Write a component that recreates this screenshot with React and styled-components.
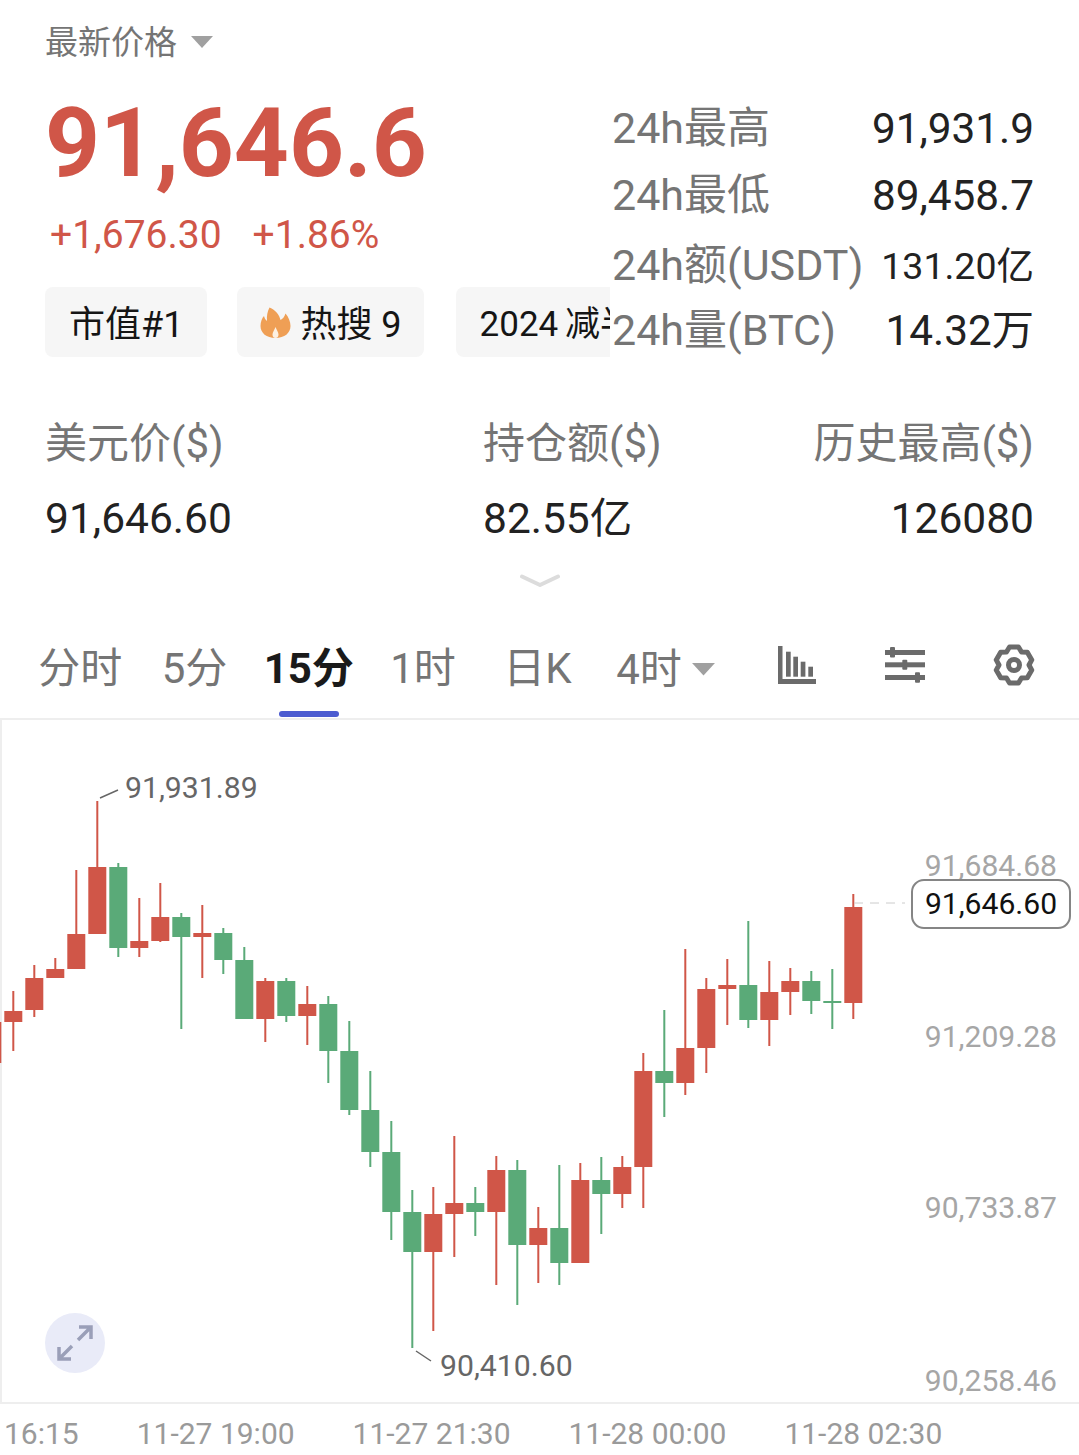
import React from "react";
import styled, { createGlobalStyle } from "styled-components";

const RED = "#d05648";
const GREEN = "#5aaa78";

const GlobalStyle = createGlobalStyle`
  html, body {
    margin: 0;
    padding: 0;
    background: #fff;
    font-family: Roboto, "Noto Sans CJK SC", sans-serif;
  }
`;

// [x, up?, wick top, wick bottom, body top, body bottom]
const candles = [
  [-7.7, 1, 1000, 1075, 1022, 1063],
  [13.3, 1, 991, 1051, 1011, 1022],
  [34.3, 1, 965, 1017, 978, 1010],
  [55.3, 1, 958, 978, 969, 978],
  [76.3, 1, 870, 969, 934, 969],
  [97.3, 1, 801, 934, 867, 934],
  [118.3, 0, 863, 957, 867, 948],
  [139.3, 1, 898, 957, 941, 948],
  [160.3, 1, 883, 942, 917, 941],
  [181.3, 0, 913, 1029, 917, 937],
  [202.3, 1, 905, 978, 933, 937],
  [223.3, 0, 928, 974, 933, 960],
  [244.3, 0, 947, 1019, 960, 1019],
  [265.3, 1, 978, 1042, 981, 1019],
  [286.3, 0, 978, 1022, 981, 1016],
  [307.3, 1, 986, 1045, 1004, 1016],
  [328.3, 0, 996, 1083, 1004, 1051],
  [349.3, 0, 1021, 1115, 1051, 1110],
  [370.3, 0, 1071, 1167, 1110, 1152],
  [391.3, 0, 1121, 1240, 1152, 1212],
  [412.3, 0, 1190, 1348, 1212, 1252],
  [433.3, 1, 1187, 1331, 1214, 1252],
  [454.3, 1, 1136, 1257, 1203, 1214],
  [475.3, 0, 1187, 1236, 1203, 1212],
  [496.3, 1, 1156, 1285, 1170, 1212],
  [517.3, 0, 1160, 1305, 1170, 1245],
  [538.3, 1, 1207, 1283, 1228, 1245],
  [559.3, 0, 1165, 1285, 1228, 1263],
  [580.3, 1, 1163, 1263, 1180, 1263],
  [601.3, 0, 1157, 1234, 1180, 1194],
  [622.3, 1, 1156, 1208, 1167, 1194],
  [643.3, 1, 1053, 1208, 1071, 1167],
  [664.3, 0, 1010, 1117, 1071, 1083],
  [685.3, 1, 949, 1095, 1048, 1083],
  [706.3, 1, 978, 1073, 989, 1048],
  [727.3, 1, 959, 1025, 985, 989],
  [748.3, 0, 921, 1028, 985, 1020],
  [769.3, 1, 961, 1046, 992, 1020],
  [790.3, 1, 968, 1015, 981, 992],
  [811.3, 0, 971, 1014, 981, 1001],
  [832.3, 0, 969, 1029, 1001, 1003],
  [853.3, 1, 894, 1019, 907, 1003],
];

const tabs = [
  { label: "分时" },
  { label: "5分" },
  { label: "15分", active: true },
  { label: "1时" },
  { label: "日K" },
];

const stats = [
  { label: "24h最高", value: "91,931.9" },
  { label: "24h最低", value: "89,458.7" },
  { label: "24h额(USDT)", value: "131.20亿", small: true },
  { label: "24h量(BTC)", value: "14.32万" },
];

// six toothed outline, same shape as the app's settings icon
const gearPath = () => {
  const pt = (deg, r) => {
    const a = (deg * Math.PI) / 180;
    return `${(21 + r * Math.cos(a)).toFixed(2)} ${(21 + r * Math.sin(a)).toFixed(2)}`;
  };
  let d = "";
  for (let i = 0; i < 6; i++) {
    const a = -90 + i * 60;
    d += `${i ? "L" : "M"}${pt(a - 14, 18.5)}L${pt(a + 14, 18.5)}L${pt(a + 30, 15)}`;
  }
  return d + "Z";
};

const Caret = ({ w = 22, h = 12, color = "#a0a0a0" }) => (
  <svg width={w} height={h} viewBox="0 0 22 12">
    <path d="M0 0H22L11 12Z" fill={color} />
  </svg>
);

const Flame = () => (
  <FlameSvg width="31" height="31" viewBox="0 0 30 31">
    <path
      d="M9 .5C15 3 19 8 20 13C22 12 24 10 25 6.500C28 10 30 15 30 19C30 26 24 31 15 31C6 31 0 26 0 19C0 15 1.500 11 3.500 9C4 11 5 13 6.500 14C6 9 7 4 9 .5Z"
      fill="#ef9f55"
    />
    <path
      d="M15 20C16 23 18 25 18 27.500C18 29.500 17 31 15 31C13 31 12 29.500 12 27.500C12 25 14 23 15 20Z"
      fill="#fdf1e2"
    />
  </FlameSvg>
);

const BarsIcon = () => (
  <svg width="38" height="38" viewBox="0 0 38 38" fill="#6b6b6b">
    <rect x="0" y="0" width="4.500" height="38" />
    <rect x="0" y="33" width="38" height="5" />
    <rect x="8" y="5.700" width="4.700" height="25" />
    <rect x="15.300" y="10.700" width="4.700" height="20" />
    <rect x="22.700" y="15.700" width="4.700" height="15" />
    <rect x="30.300" y="20.700" width="4.700" height="10" />
  </svg>
);

const SlidersIcon = () => (
  <svg width="40" height="36" viewBox="0 0 40 36" fill="#6b6b6b">
    <rect x="0" y="3" width="40" height="5" />
    <rect x="5" y="0" width="5" height="10.500" rx="1" />
    <rect x="0" y="15.300" width="40" height="5" />
    <rect x="17.300" y="12.800" width="5" height="10" rx="1" />
    <rect x="0" y="28" width="40" height="5" />
    <rect x="30" y="25.300" width="5" height="10.500" rx="1" />
  </svg>
);

const GearIcon = () => (
  <svg width="42" height="42" viewBox="0 0 42 42" fill="none" stroke="#6b6b6b">
    <path d={gearPath()} strokeWidth="5" strokeLinejoin="round" />
    <circle cx="21" cy="21" r="5.500" strokeWidth="5" />
  </svg>
);

const ExpandIcon = () => (
  <svg width="36" height="36" viewBox="0 0 36 36" fill="none" stroke="#9a9fb8" strokeWidth="3.500">
    <path d="M21 15 34 2M22 2h12v12" />
    <path d="M15 21 2 34M14 34H2V22" />
  </svg>
);

const Candles = () => (
  <CandleSvg viewBox="0 720 1079 683" width="1079" height="683">
    {candles.map(([x, up, wickTop, wickBottom, bodyTop, bodyBottom]) => {
      const color = up ? RED : GREEN;
      return (
        <g key={x} fill={color}>
          <rect x={x - 1} y={wickTop} width="2" height={wickBottom - wickTop} />
          <rect x={x - 9} y={bodyTop} width="18" height={bodyBottom - bodyTop} />
        </g>
      );
    })}
    <path d="M100 798 118 790M416 1351 431 1361" stroke="#666" strokeWidth="1.500" fill="none" />
    <path d="M854 903H905" stroke="#ccc" strokeWidth="1" strokeDasharray="9 7" fill="none" />
  </CandleSvg>
);

const App = () => (
  <Page>
    <GlobalStyle />
    <Top>
      <Left>
        <Title>
          最新价格
          <Caret />
        </Title>
        <Price>91,646.6</Price>
        <Change>
          <span>+1,676.30</span>
          <span>+1.86%</span>
        </Change>
        <Tags>
          <Tag>市值#1</Tag>
          <HotTag>
            <Flame />
            热搜 9
          </HotTag>
          <Tag $small>2024 减半</Tag>
        </Tags>
      </Left>
      <StatList>
        {stats.map((s) => (
          <StatRow key={s.label}>
            <StatLabel>{s.label}</StatLabel>
            <StatValue $small={s.small}>{s.value}</StatValue>
          </StatRow>
        ))}
      </StatList>
    </Top>

    <Summary>
      <SummaryCol>
        <SummaryLabel>美元价($)</SummaryLabel>
        <SummaryValue>91,646.60</SummaryValue>
      </SummaryCol>
      <SummaryCol>
        <SummaryLabel>持仓额($)</SummaryLabel>
        <SummaryValue>82.55亿</SummaryValue>
      </SummaryCol>
      <SummaryCol $right>
        <SummaryLabel>历史最高($)</SummaryLabel>
        <SummaryValue>126080</SummaryValue>
      </SummaryCol>
    </Summary>

    <Chevron>
      <svg width="40" height="14" viewBox="0 0 40 14" fill="none">
        <path d="M2 2.500 20 11 38 2.500" stroke="#dcdcdc" strokeWidth="4" strokeLinecap="round" strokeLinejoin="round" />
      </svg>
    </Chevron>

    <TabBar>
      {tabs.map((t) => (
        <Tab key={t.label} $active={t.active}>
          {t.label}
        </Tab>
      ))}
      <DropTab>
        4时
        <Caret w={23} h={12.5} />
      </DropTab>
      <IconTab>
        <BarsIcon />
      </IconTab>
      <IconTab>
        <SlidersIcon />
      </IconTab>
      <IconTab>
        <GearIcon />
      </IconTab>
    </TabBar>

    <Chart>
      <Candles />
      <ChartLabel $x={125} $y={50}>91,931.89</ChartLabel>
      <ChartLabel $x={440} $y={628}>90,410.60</ChartLabel>
      <AxisLabel $y={128}>91,684.68</AxisLabel>
      <AxisLabel $y={299}>91,209.28</AxisLabel>
      <AxisLabel $y={470}>90,733.87</AxisLabel>
      <AxisLabel $y={643}>90,258.46</AxisLabel>
      <PriceTag>91,646.60</PriceTag>
      <ExpandButton>
        <ExpandIcon />
      </ExpandButton>
    </Chart>

    <TimeAxis>
      <span>16:15</span>
      <span>11-27 19:00</span>
      <span>11-27 21:30</span>
      <span>11-28 00:00</span>
      <span>11-28 02:30</span>
    </TimeAxis>
  </Page>
);

export default App;

const Page = styled.div`
  width: 1079px;
  height: 1455px;
  overflow: hidden;
  background: #fff;
`;

const Top = styled.div`
  display: flex;
  height: 358px;
`;

const Left = styled.div`
  width: 610px;
  flex: none;
  padding: 20px 0 0 45px;
  box-sizing: border-box;
  overflow: hidden;
`;

const Title = styled.div`
  display: flex;
  align-items: center;
  gap: 14px;
  height: 44px;
  line-height: 43px;
  font-size: 33px;
  color: #757575;
`;

const Price = styled.div`
  margin-top: 23px;
  height: 112px;
  line-height: 112px;
  font-size: 96px;
  font-weight: 700;
  color: ${RED};
`;

const Change = styled.div`
  display: flex;
  gap: 31px;
  margin-top: 12px;
  padding-left: 5px;
  height: 48px;
  line-height: 48px;
  font-size: 39px;
  color: ${RED};
`;

const Tags = styled.div`
  display: flex;
  gap: 30px;
  margin-top: 28px;
`;

const Tag = styled.div`
  display: flex;
  flex: none;
  align-items: center;
  height: 70px;
  padding: 5px 24px 0;
  box-sizing: border-box;
  border-radius: 8px;
  background: #f6f6f6;
  line-height: 60px;
  font-size: ${(p) => (p.$small ? "35px" : "36px")};
  word-spacing: ${(p) => (p.$small ? "-2px" : "0")};
  color: #151515;
  white-space: pre;
`;

const HotTag = styled(Tag)`
  gap: 9px;
  margin-right: 2px;
  padding: 5px 22px 0 23px;
`;

const FlameSvg = styled.svg`
  margin-top: -5px;
`;

const StatList = styled.div`
  display: grid;
  grid-template-rows: 66px 68px 72px 58px;
  width: 422px;
  margin: 95px 0 0 2px;
`;

const StatRow = styled.div`
  display: flex;
  justify-content: space-between;
  align-items: center;
`;

const StatLabel = styled.span`
  line-height: 50px;
  font-size: 43px;
  color: #757575;
`;

const StatValue = styled.span`
  padding-top: 2px;
  line-height: 50px;
  font-size: ${(p) => (p.$small ? "37.500px" : "42.300px")};
  color: #222;
`;

const Summary = styled.div`
  display: grid;
  grid-template-columns: 438px 1fr auto;
  margin-top: 62px;
  padding: 0 45px;
`;

const SummaryCol = styled.div`
  display: flex;
  flex-direction: column;
  gap: 24px;
  text-align: ${(p) => (p.$right ? "right" : "left")};
`;

const SummaryLabel = styled.div`
  height: 50px;
  line-height: 48px;
  font-size: 42px;
  color: #757575;
`;

const SummaryValue = styled.div`
  height: 50px;
  line-height: 50px;
  font-size: 42.500px;
  color: #222;
`;

const Chevron = styled.div`
  display: flex;
  justify-content: center;
  margin-top: 30px;
  height: 14px;
`;

const TabBar = styled.div`
  display: flex;
  align-items: center;
  height: 99px;
  margin-top: 33px;
  padding-left: 23px;
  box-sizing: border-box;
  border-bottom: 2px solid #eee;
`;

const Tab = styled.div`
  position: relative;
  width: 114.300px;
  height: 100%;
  flex: none;
  text-align: center;
  line-height: 96px;
  font-size: 42px;
  font-weight: ${(p) => (p.$active ? 700 : 400)};
  color: ${(p) => (p.$active ? "#1a1a1a" : "#757575")};
  &::after {
    content: "";
    display: ${(p) => (p.$active ? "block" : "none")};
    position: absolute;
    left: 27px;
    bottom: 1px;
    width: 60px;
    height: 6px;
    border-radius: 3px;
    background: #4b5bd0;
  }
`;

const DropTab = styled.div`
  display: flex;
  align-items: center;
  justify-content: center;
  gap: 10px;
  width: 139px;
  height: 100%;
  flex: none;
  margin: 0 8px 0 1.500px;
  line-height: 96px;
  font-size: 42px;
  color: #757575;
`;

const IconTab = styled.div`
  display: flex;
  align-items: center;
  justify-content: center;
  width: 108.300px;
  height: 100%;
  flex: none;
  padding-bottom: 10px;
  box-sizing: border-box;
`;

const Chart = styled.div`
  position: relative;
  height: 684px;
  box-sizing: border-box;
  border-bottom: 2px solid #eee;
  overflow: hidden;
  &::before {
    content: "";
    position: absolute;
    left: 0;
    top: 0;
    bottom: 0;
    width: 2px;
    background: #eee;
  }
`;

const CandleSvg = styled.svg`
  position: absolute;
  left: 0;
  top: 0;
`;

const ChartLabel = styled.div`
  position: absolute;
  left: ${(p) => p.$x}px;
  top: ${(p) => p.$y}px;
  line-height: 36px;
  font-size: 30.200px;
  color: #666;
`;

const AxisLabel = styled.div`
  position: absolute;
  right: 22px;
  top: ${(p) => p.$y}px;
  line-height: 36px;
  font-size: 30.100px;
  color: #a6a6a6;
`;

const PriceTag = styled.div`
  position: absolute;
  right: 8px;
  top: 159px;
  width: 160px;
  height: 50px;
  box-sizing: border-box;
  border: 2px solid #858585;
  border-radius: 13px;
  background: #fff;
  text-align: center;
  line-height: 46px;
  font-size: 30.100px;
  color: #111;
`;

const ExpandButton = styled.div`
  position: absolute;
  left: 45px;
  bottom: 29px;
  display: flex;
  align-items: center;
  justify-content: center;
  width: 60px;
  height: 60px;
  border-radius: 50%;
  background: #e9ebf8;
`;

const TimeAxis = styled.div`
  display: flex;
  gap: 58px;
  padding: 12px 0 0 4px;
  line-height: 36px;
  font-size: 30px;
  color: #9a9a9a;
  white-space: nowrap;
`;
